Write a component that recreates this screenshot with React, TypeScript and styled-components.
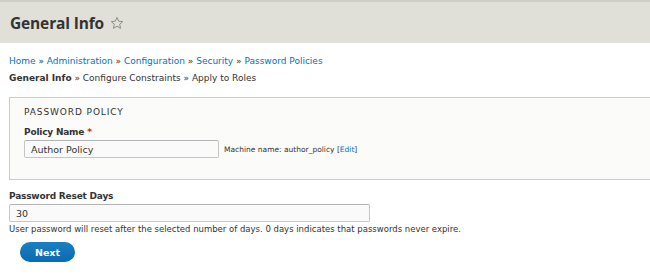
import React from "react";
import styled, { createGlobalStyle } from "styled-components";

const Global = createGlobalStyle`
  html, body { margin: 0; padding: 0; background: #ffffff; }
  body { font-family: "DejaVu Sans", "Liberation Sans", sans-serif; color: #333; }
  * { box-sizing: border-box; }
`;

const Page = styled.div`
  width: 650px;
  height: 280px;
  overflow: hidden;
  display: flex;
  flex-direction: column;
`;

const Header = styled.header`
  height: 43px;
  background: #e0dfd8;
  border-top: 2px solid #cfcfc8;
  display: flex;
  align-items: center;
  padding: 1px 10px 0;
  gap: 6px;
`;

const Title = styled.h1`
  margin: 0;
  font-family: "Open Sans", "DejaVu Sans", sans-serif;
  font-size: 15.5px;
  font-weight: bold;
  color: #333;
  letter-spacing: -0.15px;
`;

const Content = styled.main`
  padding: 10px 9px 0;
  display: flex;
  flex-direction: column;
`;

const Crumbs = styled.nav`
  font-size: 9px;
  line-height: 17px;
  color: #333;
  a { color: #0074bd; text-decoration: none; }
`;

const Steps = styled.div`
  font-size: 9px;
  line-height: 17px;
  color: #333;
  b { font-weight: bold; }
`;

const Fieldset = styled.section`
  margin-top: 10px;
  margin-right: -20px;
  border: 1px solid #cccccc;
  background: #fbfbf9;
  padding: 7px 14px 19px;
  height: 83px;
`;

const Legend = styled.div`
  font-size: 9px;
  letter-spacing: 0.9px;
  text-transform: uppercase;
  color: #333;
  line-height: 15px;
`;

const Label = styled.label`
  display: block;
  font-size: 9px;
  font-weight: bold;
  color: #333;
  line-height: 14px;
  letter-spacing: -0.2px;
  span { color: #e32700; margin-left: 3px; }
`;

const Row = styled.div`
  display: flex;
  align-items: center;
  gap: 5px;
`;

const Input = styled.input<{ $w: number }>`
  width: ${(p) => p.$w}px;
  height: 18px;
  border: 1px solid #c6c6c6;
  border-top-color: #b4b4b4;
  border-radius: 2px;
  background: #fafafa;
  padding: 0 6px;
  font-family: inherit;
  font-size: 9.5px;
  color: #333;
`;

const Small = styled.span`
  font-size: 7.5px;
  color: #333;
  a { color: #0074bd; text-decoration: none; }
`;

const FormItem = styled.div<{ $top: number }>`
  margin-top: ${(p) => p.$top}px;
  display: flex;
  flex-direction: column;
  gap: 1px;
`;

const Description = styled.div`
  font-size: 8.5px;
  color: #333;
  margin-top: 2px;
`;

const Button = styled.button`
  margin: 8px 0 0 11px;
  width: 55px;
  height: 20px;
  border: none;
  border-radius: 10px;
  background: linear-gradient(#1a7fc4, #0a6aae);
  color: #fff;
  font-family: inherit;
  font-weight: bold;
  font-size: 9.5px;
  padding: 0;
`;

const Star = () => (
  <svg width="14" height="14" viewBox="0 0 24 24" fill="none" stroke="#888" strokeWidth="1.6" strokeLinejoin="round">
    <polygon points="12,2.5 14.9,8.9 21.8,9.6 16.6,14.3 18.1,21.2 12,17.6 5.9,21.2 7.4,14.3 2.2,9.6 9.1,8.9" />
  </svg>
);

export default function App() {
  return (
    <Page>
      <Global />
      <Header>
        <Title>General Info</Title>
        <Star />
      </Header>
      <Content>
        <Crumbs>
          <a href="#">Home</a> » <a href="#">Administration</a> » <a href="#">Configuration</a> »{" "}
          <a href="#">Security</a> » <a href="#">Password Policies</a>
        </Crumbs>
        <Steps>
          <b>General Info</b> » Configure Constraints » Apply to Roles
        </Steps>
        <Fieldset>
          <Legend>Password Policy</Legend>
          <FormItem $top={5}>
            <Label>
              Policy Name<span>*</span>
            </Label>
            <Row>
              <Input $w={195} defaultValue="Author Policy" />
              <Small>
                Machine name: author_policy [<a href="#">Edit</a>]
              </Small>
            </Row>
          </FormItem>
        </Fieldset>
        <FormItem $top={9}>
          <Label>Password Reset Days</Label>
          <Input $w={361} defaultValue="30" />
        </FormItem>
        <Description>
          User password will reset after the selected number of days. 0 days indicates that passwords never expire.
        </Description>
        <div>
          <Button>Next</Button>
        </div>
      </Content>
    </Page>
  );
}
